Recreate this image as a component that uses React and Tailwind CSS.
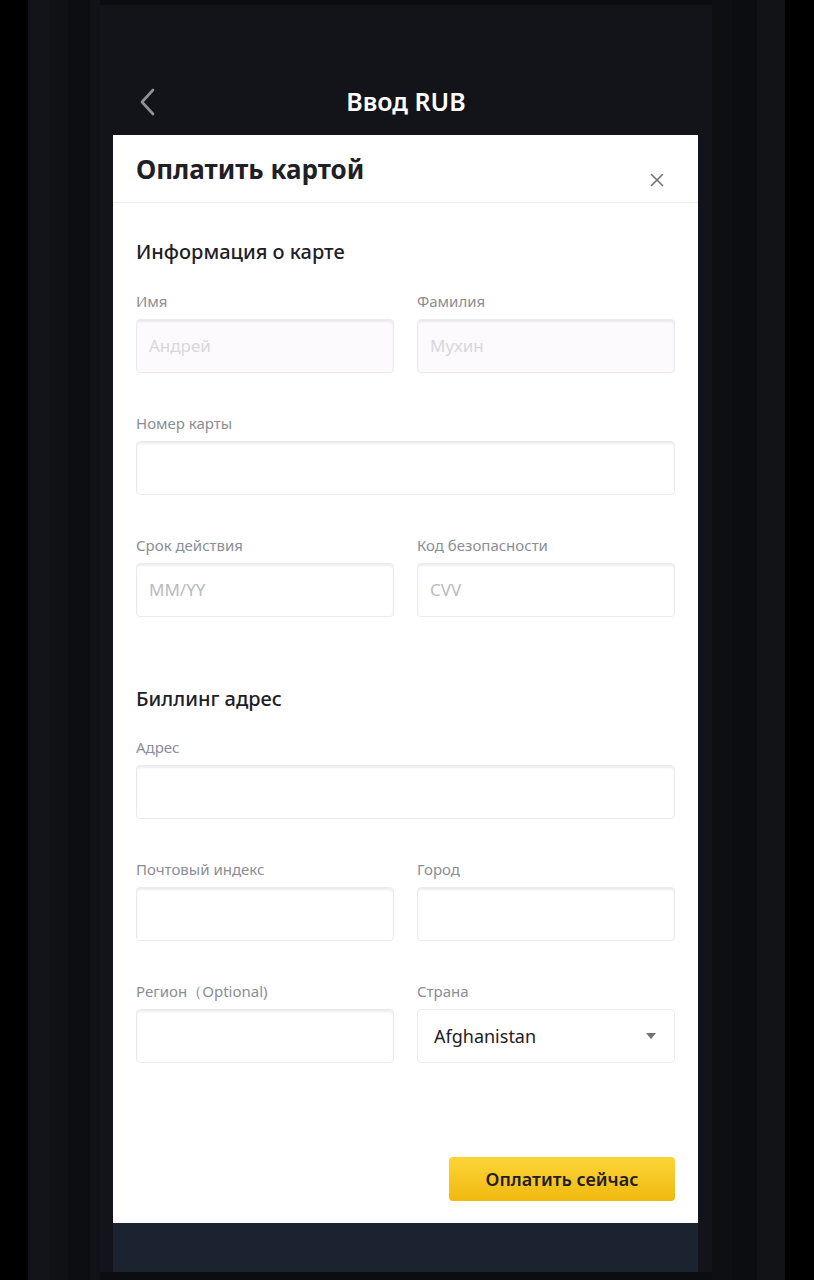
import React from "react";

const FONT = { fontFamily: "'Noto Sans', 'Open Sans', sans-serif" };

const Field = ({ label, placeholder, disabled, className = "" }) => (
    <div className={`flex flex-col ${className}`}>
        <span className="text-[15px] leading-[20px] text-[#8a8e96] mb-[8px]">{label}</span>
        <div
            className={`h-[54px] rounded-[4px] border border-[#e9ebee] shadow-[inset_0_2px_2px_rgba(0,0,0,0.07)] flex items-center px-[12px] ${
                disabled ? "bg-[#fcfafc]" : "bg-white"
            }`}
        >
            {placeholder && (
                <span className={`text-[17px] ${disabled ? "text-[#d9d7dc]" : "text-[#b8bbc0]"}`}>{placeholder}</span>
            )}
        </div>
    </div>
);

export default function App() {
    return (
        <div className="w-[814px] h-[1280px] flex bg-black overflow-hidden" style={FONT}>
            {/* left frame */}
            <div className="w-[28px] shrink-0 bg-black" />
            <div className="w-[72px] shrink-0 bg-[#101216] flex">
                <div className="w-[22px] bg-[#121419]" />
                <div className="w-[18px] bg-[#0f1114]" />
                <div className="w-[22px] bg-[#0c0e11]" />
                <div className="flex-1 bg-[#101215]" />
            </div>

            {/* phone screen */}
            <div className="w-[612px] shrink-0 flex flex-col bg-[#121419]">
                <div className="h-[5px] bg-[#0c0d10]" />
                {/* nav bar */}
                <div className="h-[130px] flex items-end pb-[16px] relative">
                    <div className="w-full flex items-center justify-center relative h-[36px]">
                        <svg
                            className="absolute left-[38px] top-[5px]"
                            width="18"
                            height="28"
                            viewBox="0 0 18 28"
                            fill="none"
                            stroke="#8f9298"
                            strokeWidth="2.6"
                            strokeLinecap="round"
                            strokeLinejoin="round"
                        >
                            <path d="M15 2 L4 14 L15 26" />
                        </svg>
                        <span className="text-white text-[25px] font-semibold leading-none">Ввод RUB</span>
                    </div>
                </div>

                {/* sheet */}
                <div className="flex pl-[13px] pr-[14px]">
                    <div className="flex-1 bg-white flex flex-col h-[1088px]">
                        <div className="h-[68px] border-b border-[#eeeff1] flex items-start justify-between pl-[23px] pr-[34px]">
                            <span className="text-[26px] font-bold text-[#1e2026] mt-[17px] leading-[34px]">
                                Оплатить картой
                            </span>
                            <svg className="mt-[38px]" width="14" height="14" viewBox="0 0 14 14" stroke="#707378" strokeWidth="1.6" strokeLinecap="round">
                                <path d="M1.5 1.5 L12.5 12.5 M12.5 1.5 L1.5 12.5" />
                            </svg>
                        </div>

                        <div className="px-[23px] flex flex-col">
                            <h2 className="text-[20px] font-medium text-[#1e2026] mt-[35px] leading-[28px]">Информация о карте</h2>

                            <div className="grid grid-cols-2 gap-x-[23px] mt-[25px]">
                                <Field label="Имя" placeholder="Андрей" disabled />
                                <Field label="Фамилия" placeholder="Мухин" disabled />
                            </div>

                            <Field className="mt-[40px]" label="Номер карты" />

                            <div className="grid grid-cols-2 gap-x-[23px] mt-[40px]">
                                <Field label="Срок действия" placeholder="MM/YY" />
                                <Field label="Код безопасности" placeholder="CVV" />
                            </div>

                            <h2 className="text-[20px] font-medium text-[#1e2026] mt-[68px] leading-[28px]">Биллинг адрес</h2>

                            <Field className="mt-[24px]" label="Адрес" />

                            <div className="grid grid-cols-2 gap-x-[23px] mt-[40px]">
                                <Field label="Почтовый индекс" />
                                <Field label="Город" />
                            </div>

                            <div className="grid grid-cols-2 gap-x-[23px] mt-[40px]">
                                <Field label="Регион（Optional)" />
                                <div className="flex flex-col">
                                    <span className="text-[15px] leading-[20px] text-[#8a8e96] mb-[8px]">Страна</span>
                                    <div className="h-[54px] rounded-[4px] border border-[#eceef0] bg-white flex items-center justify-between pl-[16px] pr-[18px]">
                                        <span className="text-[18px] text-[#1e2026]">Afghanistan</span>
                                        <svg width="10" height="6" viewBox="0 0 10 6">
                                            <path d="M0 0 L10 0 L5 6 Z" fill="#6f7378" />
                                        </svg>
                                    </div>
                                </div>
                            </div>

                            <div className="flex justify-end mt-[94px]">
                                <button className="w-[226px] h-[44px] rounded-[4px] bg-gradient-to-b from-[#fcd535] to-[#f0b90b] text-[#1e2026] text-[18px] font-semibold">
                                    Оплатить сейчас
                                </button>
                            </div>
                        </div>
                    </div>
                </div>

                <div className="flex pl-[13px] pr-[14px]">
                    <div className="flex-1 h-[49px] bg-[#1b2330]" />
                </div>
                <div className="flex-1 bg-[#0c0d10]" />
            </div>

            {/* right frame */}
            <div className="w-[73px] shrink-0 bg-[#101216] flex">
                <div className="w-[20px] bg-[#0d0f12]" />
                <div className="w-[25px] bg-[#0b0d10]" />
                <div className="flex-1 bg-[#111317]" />
            </div>
            <div className="flex-1 bg-black" />
        </div>
    );
}
